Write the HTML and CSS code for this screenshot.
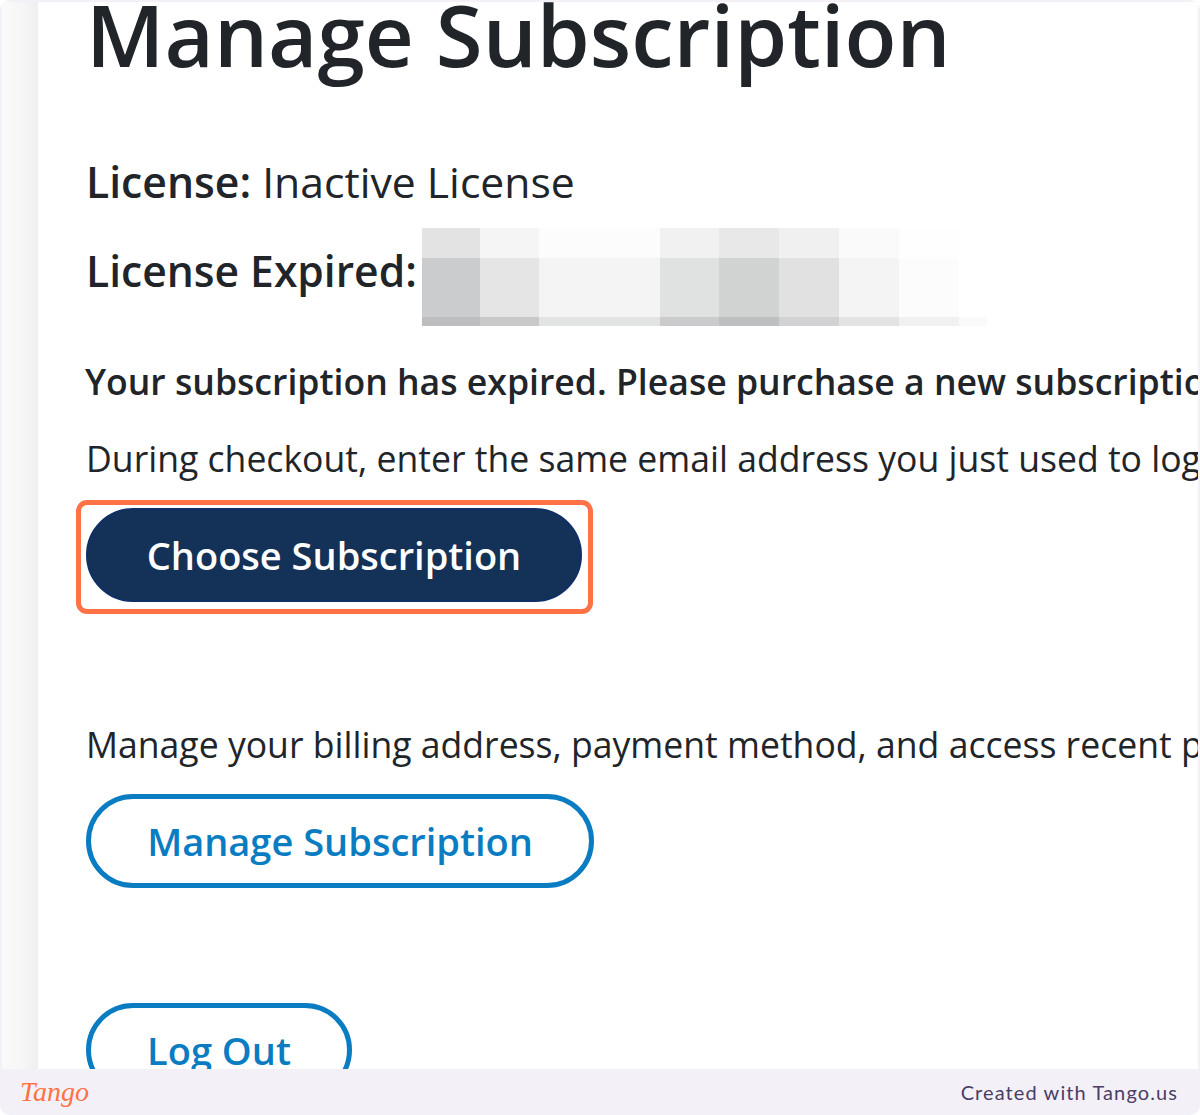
FILE: index.html
```html
<!DOCTYPE html>
<html lang="en">
<head>
  <meta charset="UTF-8">
  <meta name="viewport" content="width=device-width, initial-scale=1.0">
  <title>Manage Subscription</title>
  <link rel="stylesheet" href="styles.css">
</head>
<body>
  <div class="frame">
    <div class="shot">
      <div class="gutter"></div>
      <main class="account">
        <h1 class="account-title">Manage Subscription</h1>
        <p class="license"><strong>License:</strong> Inactive License</p>
        <div class="license-row">
          <strong class="license-label">License Expired:</strong>
          <!-- pixelated date -->
          <svg class="redacted" width="565" height="98" viewBox="0 0 565 98" shape-rendering="crispEdges" aria-hidden="true">
            <rect x="0" y="0" width="58" height="30" fill="#e3e3e3"/>
            <rect x="58" y="0" width="59" height="30" fill="#f4f5f4"/>
            <rect x="117" y="0" width="121" height="30" fill="#fcfcfc"/>
            <rect x="238" y="0" width="59" height="30" fill="#f1f1f1"/>
            <rect x="297" y="0" width="60" height="30" fill="#e8e8e8"/>
            <rect x="357" y="0" width="60" height="30" fill="#f0f0f0"/>
            <rect x="417" y="0" width="60" height="30" fill="#fafafa"/>
            <rect x="477" y="0" width="60" height="30" fill="#fefefe"/>
            <rect x="0" y="30" width="58" height="59" fill="#cbcccd"/>
            <rect x="58" y="30" width="59" height="59" fill="#e5e5e5"/>
            <rect x="117" y="30" width="121" height="59" fill="#f4f4f4"/>
            <rect x="238" y="30" width="59" height="59" fill="#e0e1e1"/>
            <rect x="297" y="30" width="60" height="59" fill="#d1d3d2"/>
            <rect x="357" y="30" width="60" height="59" fill="#e1e1e1"/>
            <rect x="417" y="30" width="60" height="59" fill="#f4f4f4"/>
            <rect x="477" y="30" width="60" height="59" fill="#fcfcfc"/>
            <rect x="0" y="89" width="58" height="9" fill="#bdbdbf"/>
            <rect x="58" y="89" width="59" height="9" fill="#c9c9ca"/>
            <rect x="117" y="89" width="121" height="9" fill="#e2e3e3"/>
            <rect x="238" y="89" width="59" height="9" fill="#cbcbcd"/>
            <rect x="297" y="89" width="60" height="9" fill="#bebfc1"/>
            <rect x="357" y="89" width="60" height="9" fill="#d2d2d4"/>
            <rect x="417" y="89" width="60" height="9" fill="#e3e3e3"/>
            <rect x="477" y="89" width="60" height="9" fill="#f1f1f1"/>
            <rect x="537" y="89" width="28" height="9" fill="#fafafa"/>
          </svg>
        </div>
        <p class="notice notice-strong">Your subscription has expired. Please purchase a new subscription.</p>
        <p class="notice notice-checkout">During checkout, enter the same email address you just used to log in.</p>
        <div class="highlighted">
          <a class="btn btn-solid">Choose Subscription</a>
          <span class="highlight-ring"></span>
        </div>
        <p class="notice notice-billing">Manage your billing address, payment method, and access recent purchases.</p>
        <a class="btn btn-outline btn-manage">Manage Subscription</a>
        <a class="btn btn-outline btn-logout">Log Out</a>
      </main>
    </div>
    <footer class="tango-bar">
      <span class="tango-logo">Tango</span>
      <span class="tango-credit">Created with Tango.us</span>
    </footer>
  </div>
</body>
</html>
```

FILE: styles.css
```css
html, body {
  margin: 0;
  height: 100%;
}
body {
  font-family: "Open Sans", "Noto Sans", sans-serif;
  color: #212529;
  background-color: #fff;
}
.frame {
  height: 1115px;
  box-sizing: border-box;
  padding: 2px 2px 0 2px;
  display: flex;
  flex-direction: column;
  background-color: #f3f1f7;
  border-radius: 10px;
  overflow: hidden;
}
.shot {
  flex: 1;
  min-height: 0;
  display: flex;
  background-color: white;
  overflow: hidden;
}
.gutter {
  width: 36px;
  flex-shrink: 0;
  background: linear-gradient(to right, #fafafa, #f6f6f6 60%, #efefef);
}
.account {
  flex: 1;
  min-width: 0;
  padding-left: 48px;
  white-space: nowrap;
  overflow: hidden;
}
.account-title {
  margin: -23px 0 0 0;
  font-size: 85.2px;
  line-height: 110px;
  font-weight: 600;
}
.license {
  margin: 68px 0 0 0;
  font-size: 42.7px;
  line-height: 50px;
}
strong {
  font-weight: 600;
}
.license-row {
  display: flex;
  align-items: flex-start;
  margin: 21px 0 0 0;
  font-size: 42.6px;
  line-height: 50px;
}
.license-label {
  margin-top: 17px;
}
.redacted {
  display: block;
  margin-left: 5px;
}
.notice {
  margin: 0;
  font-size: 35.6px;
  line-height: 50px;
}
.notice-strong {
  margin: 30px 0 0 -1px;
  font-weight: 600;
}
.notice-checkout {
  margin-top: 27px;
}
.notice-billing {
  margin-top: 117px;
}
.highlighted {
  position: relative;
  width: 496px;
  margin-top: 25px;
}
.highlight-ring {
  position: absolute;
  top: -8px;
  left: -10px;
  right: -11px;
  bottom: -12px;
  border: 5px solid #ff7245;
  border-radius: 11px;
}
.btn {
  display: flex;
  align-items: center;
  justify-content: center;
  box-sizing: border-box;
  height: 94px;
  border-radius: 47px;
  font-size: 38px;
  font-weight: 600;
}
.btn-solid {
  width: 496px;
  background-color: #143258;
  border: 2px solid #0f2f66;
  color: white;
}
.btn-outline {
  border: 5px solid #0a7cc2;
  color: #0a7cc2;
}
.btn-manage {
  width: 508px;
  margin-top: 25px;
}
.btn-logout {
  width: 266px;
  margin-top: 115px;
}
.tango-bar {
  height: 46px;
  flex-shrink: 0;
  margin: 0 -2px;
  padding: 0 22px 0 20px;
  display: flex;
  align-items: center;
  justify-content: space-between;
  background-color: #f3f1f7;
}
.tango-logo {
  font-family: "Liberation Serif", serif;
  font-style: italic;
  font-size: 28px;
  color: #ff7245;
}
.tango-credit {
  font-family: "Lato", sans-serif;
  font-size: 20px;
  letter-spacing: 1.1px;
  color: #4a3d66;
}
```
